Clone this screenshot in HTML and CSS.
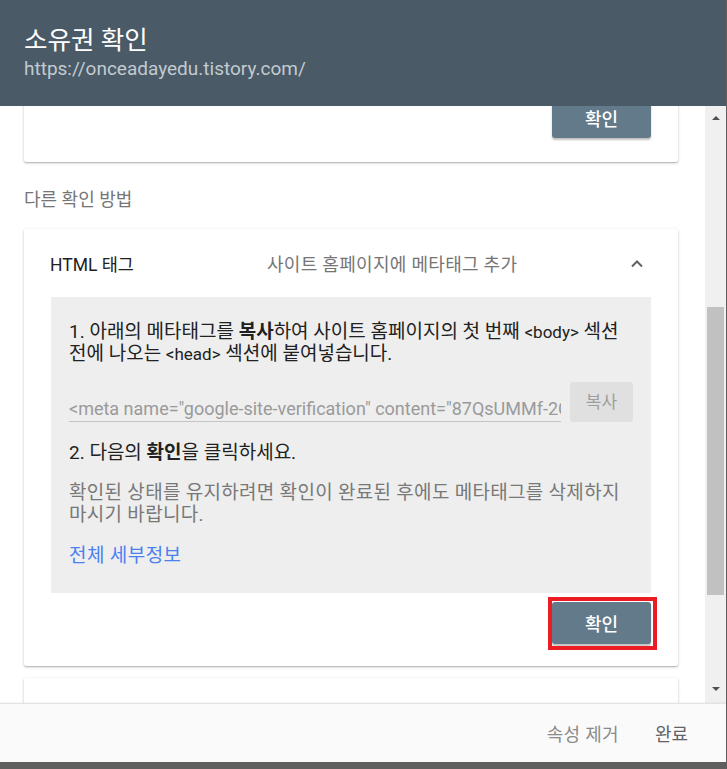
FILE: index.html
```html
<!DOCTYPE html>
<html lang="ko">
<head>
<meta charset="utf-8">
<title>소유권 확인</title>
<link rel="stylesheet" href="styles.css">
</head>
<body>
<div class="dialog">
  <header class="dlg-header">
    <h1 class="dlg-title">소유권 확인</h1>
    <div class="dlg-url">https://onceadayedu.tistory.com/</div>
  </header>

  <div class="dlg-body">
    <div class="scroll-area">
      <div class="scroll-content">
        <section class="card card-top">
          <div class="card-actions">
            <button class="btn-primary">확인</button>
          </div>
        </section>

        <div class="section-label">다른 확인 방법</div>

        <section class="card card-method">
          <div class="method-head">
            <span class="method-name">HTML 태그</span>
            <span class="method-desc">사이트 홈페이지에 메타태그 추가</span>
            <svg class="chevron" width="14" height="9" viewBox="0 0 14 9"><polyline points="2,7.5 7,2.5 12,7.5" fill="none" stroke="#5f6368" stroke-width="2"/></svg>
          </div>
          <div class="method-panel">
            <p class="step">1. 아래의 메타태그를 <b>복사</b>하여 사이트 홈페이지의 첫 번째 <span class="lat">&lt;body&gt;</span> 섹션 전에 나오는 <span class="lat">&lt;head&gt;</span> 섹션에 붙여넣습니다.</p>
            <div class="copy-row">
              <div class="meta-field">&lt;meta name="google-site-verification" content="87QsUMMf-2Cx9vQkR4pLq8sT1YbHnW3jZ0aFdE6uKxM" /&gt;</div>
              <button class="btn-copy">복사</button>
            </div>
            <p class="step step-2">2. 다음의 <b>확인</b>을 클릭하세요.</p>
            <p class="note">확인된 상태를 유지하려면 확인이 완료된 후에도 메타태그를 삭제하지 마시기 바랍니다.</p>
            <a class="details-link" href="#">전체 세부정보</a>
          </div>
          <div class="card-actions card-actions-2">
            <span class="btn-wrap">
              <button class="btn-primary">확인</button>
              <span class="highlight"></span>
            </span>
          </div>
        </section>

        <section class="card card-next"></section>
      </div>
    </div>

    <div class="scrollbar">
      <div class="sb-arrow sb-up"></div>
      <div class="sb-track"><div class="sb-thumb"></div></div>
      <div class="sb-arrow sb-down"></div>
    </div>
  </div>

  <footer class="dlg-footer">
    <button class="btn-text btn-muted">속성 제거</button>
    <button class="btn-text btn-done">완료</button>
  </footer>
</div>
</body>
</html>
```
FILE: styles.css
```css
* { box-sizing: border-box; }

html, body {
  margin: 0;
  padding: 0;
}

body {
  background: #5f5f5f;
  font-family: Roboto, "Noto Sans CJK KR", sans-serif;
  color: #212121;
  width: 727px;
  height: 769px;
  overflow: hidden;
}

.dialog {
  width: 726px;
  height: 762px;
  display: grid;
  grid-template-rows: 106px 1fr 59px;
  background: #fff;
}

/* header */
.dlg-header {
  background: #4a5a67;
  padding: 25px 24px 0;
}
.dlg-title {
  margin: 0;
  font-size: 25.5px;
  font-weight: 400;
  line-height: 30px;
  color: #fff;
}
.dlg-url {
  margin-top: 2px;
  font-size: 19px;
  line-height: 24px;
  color: #c3cad0;
}

/* body */
.dlg-body {
  display: flex;
  overflow: hidden;
  min-height: 0;
}
.scroll-area {
  flex: 1;
  overflow: hidden;
  background: #fff;
}
.scroll-content {
  margin-top: -44px;
  padding: 0 27px 0 24px;
}

.card {
  background: #fff;
  border-radius: 2px;
  box-shadow: 0 1px 3px rgba(0,0,0,0.22), 0 1px 1px rgba(0,0,0,0.14);
}

.card-top {
  height: 100px;
  display: flex;
  align-items: flex-end;
  padding: 0 27px 24px;
}
.card-actions {
  display: flex;
  justify-content: flex-end;
  width: 100%;
}

.btn-primary {
  width: 99px;
  height: 41px;
  border: none;
  border-radius: 3px;
  background: #627a8a;
  color: #fff;
  font-family: Roboto, "Noto Sans CJK KR", sans-serif;
  font-size: 18px;
  font-weight: 500;
  box-shadow: 0 2px 2px rgba(0,0,0,0.25);
  padding: 0;
}

.section-label {
  margin-top: 27px;
  font-size: 18px;
  line-height: 22px;
  color: #757575;
}

.card-method {
  margin-top: 18px;
  padding: 0 27px 22px;
}
.method-head {
  height: 68px;
  display: grid;
  grid-template-columns: 216px 1fr auto;
  align-items: center;
  padding: 0 7px 0 0;
}
.method-name {
  font-size: 17.5px;
  color: #212121;
  margin-left: -1px;
}
.method-desc {
  font-size: 18px;
  letter-spacing: 0.3px;
  color: #757575;
}
.chevron { display: block; }

.method-panel {
  background: #eeeeee;
  padding: 24px 18px 26px;
  word-break: keep-all;
}
.method-panel p { margin: 0; }
.method-panel .step {
  font-size: 19px;
  line-height: 22px;
  color: #212121;
}
.step b { font-weight: 700; }
.lat { font-size: 17px; }

.copy-row {
  display: flex;
  align-items: stretch;
  margin-top: 17px;
  height: 40px;
}
.meta-field {
  width: 492px;
  overflow: hidden;
  white-space: nowrap;
  font-size: 18px;
  line-height: 22px;
  color: #9a9a9a;
  border-bottom: 1px solid #c4c4c4;
  padding-top: 16px;
}
.btn-copy {
  margin-left: 9px;
  width: 63px;
  border: none;
  border-radius: 3px;
  background: #e0e0e0;
  color: #9e9e9e;
  font-family: Roboto, "Noto Sans CJK KR", sans-serif;
  font-size: 17px;
  padding: 0 0 4px;
}

.method-panel .step-2 { margin-top: 20px; }

.method-panel .note {
  margin-top: 18px;
  font-size: 19px;
  letter-spacing: 0.3px;
  line-height: 22px;
  color: #787878;
}

.details-link {
  display: block;
  margin-top: 19px;
  font-size: 19px;
  letter-spacing: 0.4px;
  line-height: 22px;
  color: #4a80f0;
  text-decoration: none;
}

.card-actions-2 {
  margin-top: 9px;
}
.btn-wrap {
  position: relative;
  display: inline-block;
}
.btn-wrap .btn-primary { height: 42px; display: block; }
.highlight {
  position: absolute;
  left: -4px;
  top: -5px;
  right: -6px;
  bottom: -6px;
  border: 4px solid #ec1c24;
  pointer-events: none;
}

.card-next {
  margin-top: 12px;
  height: 120px;
}

/* scrollbar */
.scrollbar {
  width: 21px;
  background: #f0f0f0;
  display: flex;
  flex-direction: column;
}
.sb-arrow {
  height: 18px;
  display: flex;
  align-items: center;
  justify-content: center;
}
.sb-up::before, .sb-down::before {
  content: "";
  width: 0;
  height: 0;
  border-left: 4px solid transparent;
  border-right: 4px solid transparent;
}
.sb-up::before { border-bottom: 4px solid #505050; margin-top: 6px; }
.sb-down::before { border-top: 4px solid #505050; margin-bottom: 10px; }
.sb-track {
  flex: 1;
  padding: 0 2px;
}
.sb-thumb {
  margin-top: 183px;
  height: 288px;
  background: #c1c1c1;
}

/* footer */
.dlg-footer {
  background: #fafafa;
  border-top: 1px solid #e2e2e2;
  box-shadow: 0 -1px 2px rgba(0,0,0,0.04);
  display: flex;
  justify-content: flex-end;
  align-items: center;
  padding: 0 30px 0 0;
  gap: 6px;
  position: relative;
}
.btn-text {
  background: none;
  border: none;
  font-family: Roboto, "Noto Sans CJK KR", sans-serif;
  font-size: 18px;
  padding: 6px 8px;
}
.btn-muted { color: #8a8a8a; margin-right: 14px; letter-spacing: 0.3px; }
.btn-done { color: #5f6368; }
```
